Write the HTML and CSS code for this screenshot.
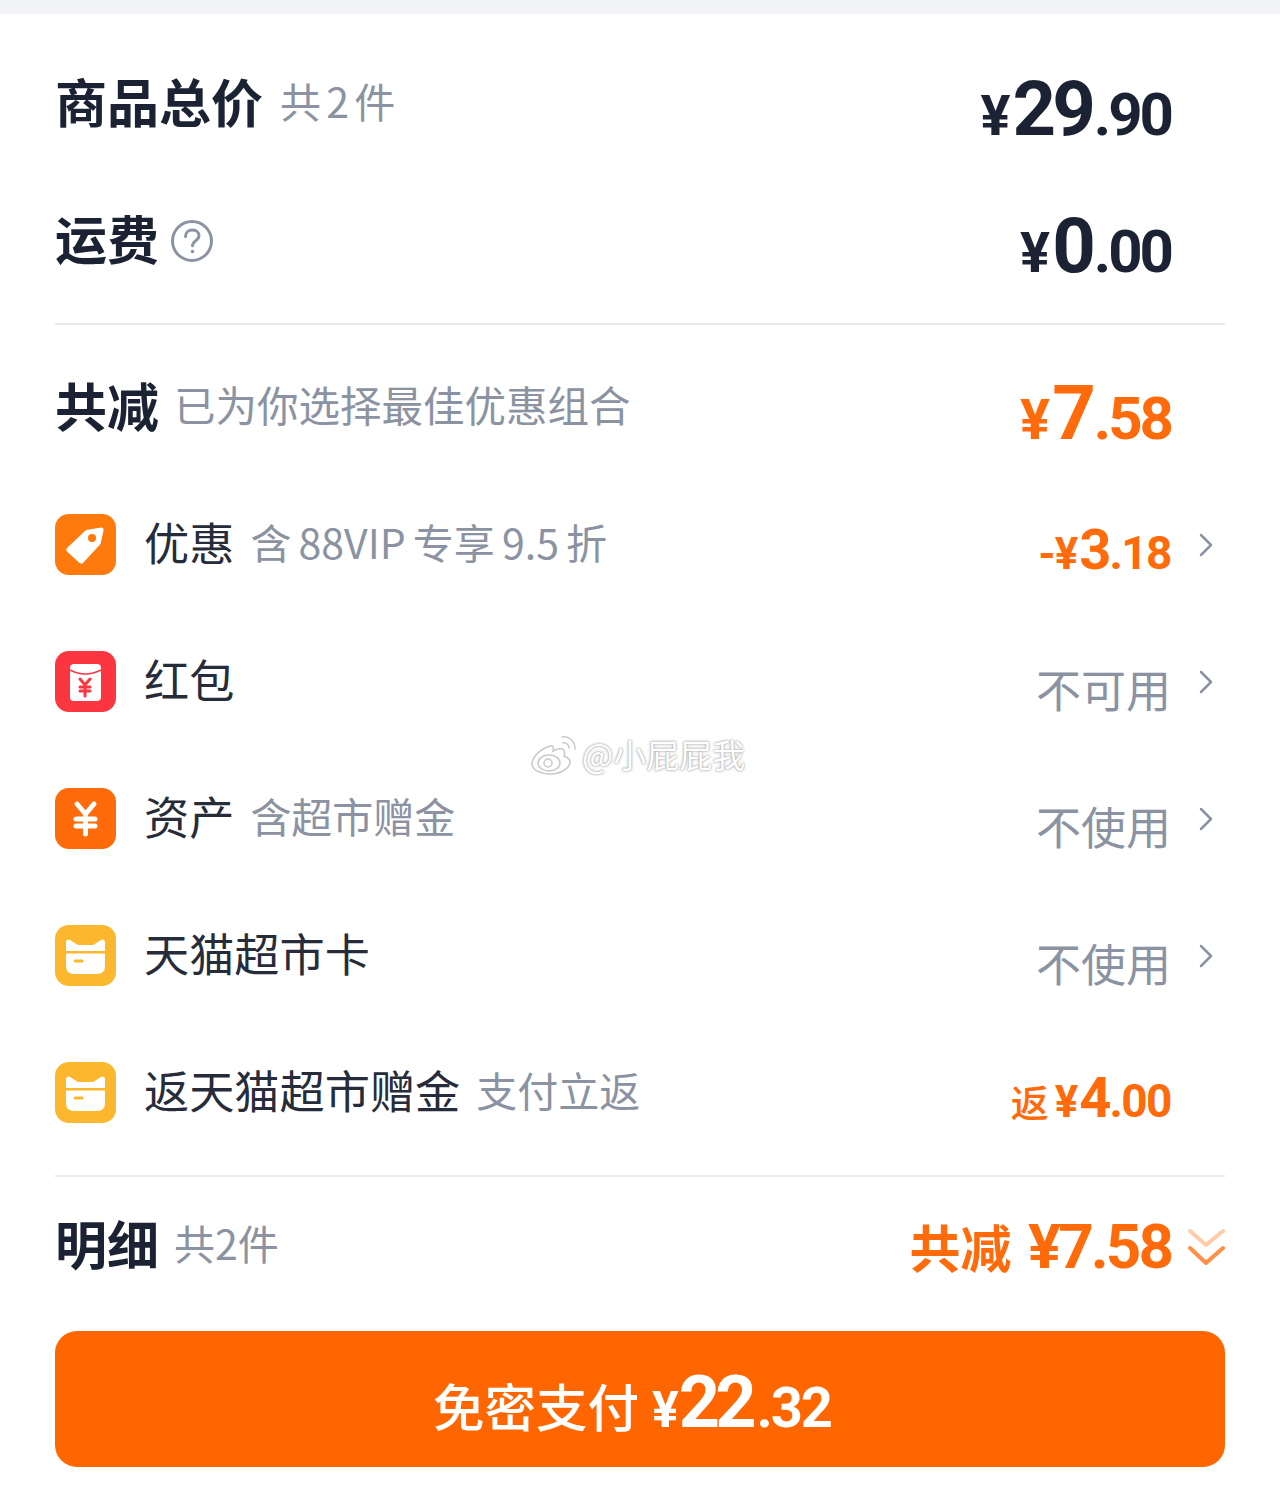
FILE: index.html
```html
<!DOCTYPE html>
<html lang="zh-CN">
<head>
  <meta charset="UTF-8">
  <title>订单优惠明细</title>
  <link rel="stylesheet" href="styles.css">
</head>
<body>

<div class="top-strip"></div>

<div class="sheet">
  <div class="row">
    <span class="title">商品总价</span>
    <span class="sub sub-spaced">共 2 件</span>
    <div class="money"><span class="yen">¥</span><span class="int">29</span><span class="dec">.90</span></div>
    <div class="slot"></div>
  </div>

  <div class="row">
    <span class="title">运费</span>
    <svg class="help" width="44" height="44" viewBox="0 0 44 44" fill="none" stroke="#8b93a3">
      <circle cx="22" cy="22" r="19.5" stroke-width="3"/>
      <path d="M15.5 17.5c0-4 3-6.500 6.800-6.500 3.800 0 6.700 2.400 6.700 5.800 0 4.700-6.500 5-6.500 10" stroke-width="3" stroke-linecap="round"/>
      <circle cx="22.500" cy="32.500" r="1.800" fill="#8b93a3" stroke="none"/>
    </svg>
    <div class="money"><span class="yen">¥</span><span class="int">0</span><span class="dec">.00</span></div>
    <div class="slot"></div>
  </div>

  <div class="divider"></div>

  <div class="row">
    <span class="title">共减</span>
    <span class="sub sub-wide">已为你选择最佳优惠组合</span>
    <div class="money orange"><span class="yen">¥</span><span class="int">7</span><span class="dec">.58</span></div>
    <div class="slot"></div>
  </div>

  <div class="row">
    <svg class="icon" width="61" height="61" viewBox="0 0 61 61">
      <rect width="61" height="61" rx="14" fill="#ff7a0c"/>
      <path d="M31 16L46 13.500Q49 13.500 48.500 16.500L45.500 30 28 49Q26.500 50.500 24.500 49L12 37.500Q10.500 36 12 34Z" fill="#fff"/>
      <circle cx="37" cy="24" r="4" fill="#ff7a0c"/>
    </svg>
    <span class="label">优惠</span>
    <span class="sub sub-mixed">含 88VIP 专享 9.5 折</span>
    <div class="money money-small orange"><span class="yen">-¥</span><span class="int">3</span><span class="dec">.18</span></div>
    <div class="slot">
      <svg width="16" height="24" viewBox="0 0 16 24" fill="none" stroke="#8b93a3" stroke-width="2.500" stroke-linecap="round" stroke-linejoin="round"><path d="M3 2l10 10L3 22"/></svg>
    </div>
  </div>

  <div class="row">
    <svg class="icon" width="61" height="61" viewBox="0 0 61 61">
      <rect width="61" height="61" rx="14" fill="#fb3640"/>
      <rect x="15" y="13" width="31" height="37" rx="4" fill="#fff"/>
      <path d="M15 19Q30 27 46 19" fill="none" stroke="#fb3640" stroke-width="1.500"/>
      <path d="M25 28l5 6 5-6M25 36h10M25 40h10M30 34v11" fill="none" stroke="#fb3640" stroke-width="3" stroke-linecap="round"/>
    </svg>
    <span class="label">红包</span>
    <div class="plain">不可用</div>
    <div class="slot">
      <svg width="16" height="24" viewBox="0 0 16 24" fill="none" stroke="#8b93a3" stroke-width="2.500" stroke-linecap="round" stroke-linejoin="round"><path d="M3 2l10 10L3 22"/></svg>
    </div>
  </div>

  <div class="row">
    <svg class="icon" width="61" height="61" viewBox="0 0 61 61">
      <rect width="61" height="61" rx="14" fill="#ff6a0a"/>
      <path d="M22 16l8.500 10L39 16M21 31h19M21 38h19M30.500 26v20" fill="none" stroke="#fff" stroke-width="5" stroke-linecap="round" stroke-linejoin="round"/>
    </svg>
    <span class="label">资产</span>
    <span class="sub">含超市赠金</span>
    <div class="plain">不使用</div>
    <div class="slot">
      <svg width="16" height="24" viewBox="0 0 16 24" fill="none" stroke="#8b93a3" stroke-width="2.500" stroke-linecap="round" stroke-linejoin="round"><path d="M3 2l10 10L3 22"/></svg>
    </div>
  </div>

  <div class="row">
    <svg class="icon" width="61" height="61" viewBox="0 0 61 61">
      <rect width="61" height="61" rx="14" fill="#fbb82f"/>
      <path d="M11 18Q11 13 15 15L23 20H38L46 15Q50 13 50 18V26H11Z" fill="#fff"/>
      <path d="M11 28.500H50V41Q50 49 42 49H19Q11 49 11 41Z" fill="#fff"/>
      <path d="M20 36h7" stroke="#fbb82f" stroke-width="3" stroke-linecap="round"/>
    </svg>
    <span class="label">天猫超市卡</span>
    <div class="plain">不使用</div>
    <div class="slot">
      <svg width="16" height="24" viewBox="0 0 16 24" fill="none" stroke="#8b93a3" stroke-width="2.500" stroke-linecap="round" stroke-linejoin="round"><path d="M3 2l10 10L3 22"/></svg>
    </div>
  </div>

  <div class="row">
    <svg class="icon" width="61" height="61" viewBox="0 0 61 61">
      <rect width="61" height="61" rx="14" fill="#fbb82f"/>
      <path d="M11 18Q11 13 15 15L23 20H38L46 15Q50 13 50 18V26H11Z" fill="#fff"/>
      <path d="M11 28.500H50V41Q50 49 42 49H19Q11 49 11 41Z" fill="#fff"/>
      <path d="M20 36h7" stroke="#fbb82f" stroke-width="3" stroke-linecap="round"/>
    </svg>
    <span class="label">返天猫超市赠金</span>
    <span class="sub">支付立返</span>
    <div class="money money-small orange"><span class="prefix">返</span><span class="yen">¥</span><span class="int">4</span><span class="dec">.00</span></div>
    <div class="slot"></div>
  </div>

  <div class="divider"></div>

  <div class="row row-detail">
    <span class="title">明细</span>
    <span class="sub">共2件</span>
    <div class="detail-total">共减 <span class="detail-num">¥7.58</span></div>
    <svg class="double-arrow" width="37" height="38" viewBox="0 0 37 38" fill="none" stroke="#ff6a0a" stroke-width="4" stroke-linecap="round" stroke-linejoin="round">
      <path d="M2 3l16 14L35 3" opacity=".35"/>
      <path d="M2 20l16 15 17-15" opacity=".75"/>
    </svg>
  </div>

  <div class="pay-btn">
    <span class="pay-text">免密支付</span>
    <span class="pay-yen">¥</span><span class="pay-int">22</span><span class="pay-dec">.32</span>
  </div>
</div>

<div class="watermark">
  <svg width="48" height="42" viewBox="0 0 48 42" fill="none" stroke="#c9c9c9" stroke-width="1.500">
    <path d="M21 13C11 15 2 24 2 31c0 6 9 10 18 10 11 0 20-6 20-12 0-4-4-5-6-6 1-3 1-6-2-7-3-1-7 1-9 2 1-3 0-6-2-5z" fill="#fff"/>
    <ellipse cx="19" cy="30" rx="11" ry="8" fill="#fff"/>
    <circle cx="18" cy="30" r="4" fill="#fff"/>
    <path d="M32 4c6-1 13 3 13 12M33 10c3-1 6 2 6 5" stroke-linecap="round"/>
  </svg>
  <span class="watermark-text">@小屁屁我</span>
</div>

</body>
</html>
```

FILE: styles.css
```css
body {
  margin: 0;
  position: relative;
  height: 1509px;
  overflow: hidden;
  background-color: #fff;
  font-family: "Noto Sans CJK SC", "Noto Sans", sans-serif;
  color: #1a2233;
}

.top-strip {
  height: 14px;
  background-color: #f1f3f7;
}

.sheet {
  padding: 21px 55px 0;
}

.row {
  display: flex;
  align-items: center;
  height: 137px;
}

.divider {
  height: 2px;
  margin: 14px 0;
  background-color: #e9eaed;
}

.title {
  margin-top: -6px;
  font-size: 52px;
  font-weight: 700;
  line-height: 60px;
  color: #1a2233;
}

.label {
  margin-top: -6px;
  font-size: 45.200px;
  line-height: 60px;
  color: #262c3a;
}

.sub {
  margin-top: -8px;
  margin-left: 16px;
  font-size: 41px;
  line-height: 60px;
  color: #8b93a3;
}

.title + .sub {
  margin-left: 15px;
}

.title + .sub-spaced {
  margin-left: 17px;
  word-spacing: -4px;
}

.sub-wide {
  font-size: 41.500px;
}

.sub-mixed {
  word-spacing: -2px;
}

.icon {
  flex-shrink: 0;
  margin-right: 28px;
}

.help {
  margin-left: 11px;
}

.money {
  margin-left: auto;
  margin-top: 10px;
  display: flex;
  align-items: baseline;
  font-family: Roboto, sans-serif;
  font-weight: 700;
  color: #1a2233;
}

.money .yen {
  margin-right: 4px;
  font-size: 56px;
  letter-spacing: -2px;
}

.money .int {
  font-size: 76px;
  letter-spacing: -4px;
}

.money .dec {
  margin-left: 2px;
  font-size: 60px;
  letter-spacing: -3px;
}

.money-small .yen {
  margin-right: 2px;
  font-size: 44px;
  letter-spacing: -1px;
}

.money-small .int {
  font-size: 56px;
  letter-spacing: -2px;
}

.money-small .dec {
  margin-left: 0;
  font-size: 46px;
  letter-spacing: -1.500px;
}

.money .prefix {
  margin-right: 6px;
  font-family: "Noto Sans CJK SC", sans-serif;
  font-size: 38px;
  font-weight: 500;
}

.orange {
  color: #ff6a0a;
}

.plain {
  margin-left: auto;
  margin-top: 14px;
  font-size: 45px;
  line-height: 60px;
  color: #8b93a3;
}

.slot {
  flex-shrink: 0;
  width: 54px;
  height: 24px;
  padding-left: 27px;
  box-sizing: border-box;
}

.row-detail {
  height: 136px;
  margin-top: -13px;
}

.detail-total {
  margin-left: auto;
  margin-top: 0;
  font-size: 51px;
  font-weight: 700;
  color: #ff6a0a;
}

.detail-num {
  margin-left: 5px;
  font-family: Roboto, sans-serif;
  font-size: 62px;
  font-weight: 700;
  letter-spacing: -3px;
}

.double-arrow {
  margin-left: 17px;
  margin-top: 2px;
}

.pay-btn {
  display: flex;
  align-items: baseline;
  justify-content: center;
  height: 136px;
  margin-top: 17px;
  padding-right: 16px;
  border-radius: 22px;
  background-color: #ff6600;
  color: #fff;
  line-height: 143px;
  font-family: Roboto, sans-serif;
  font-weight: 700;
}

.pay-text {
  margin-right: 13px;
  font-family: "Noto Sans CJK SC", sans-serif;
  font-size: 51.500px;
  font-weight: 500;
}

.pay-yen {
  margin-right: 2px;
  font-size: 50px;
  letter-spacing: -2px;
}

.pay-int {
  font-size: 72px;
  letter-spacing: -5px;
}

.pay-dec {
  margin-left: 5px;
  font-size: 56px;
  letter-spacing: -2px;
}

.watermark {
  position: absolute;
  left: 530px;
  top: 732px;
  display: flex;
  align-items: center;
  gap: 4px;
}

.watermark-text {
  font-size: 33px;
  line-height: 44px;
  color: #fff;
  text-shadow: 0 0 3px #999, 0 0 1px #aaa;
}
```
